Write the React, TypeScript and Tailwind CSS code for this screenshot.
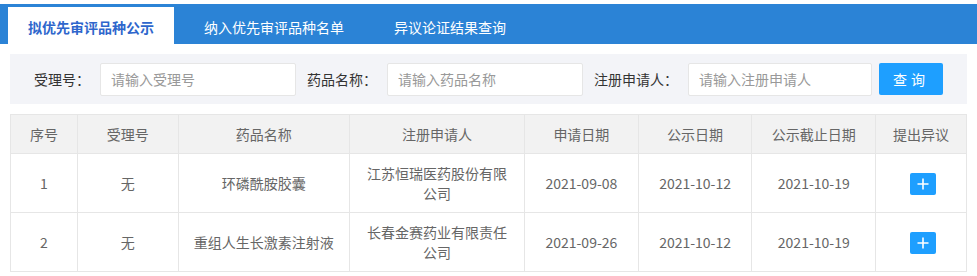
import React from 'react'

const font = { fontFamily: '"Noto Sans CJK SC", "Liberation Sans", sans-serif' }

const tabs = ['拟优先审评品种公示', '纳入优先审评品种名单', '异议论证结果查询']

const columns = [
  { title: '序号', w: 'w-[67px]' },
  { title: '受理号', w: 'w-[101px]' },
  { title: '药品名称', w: 'w-[172px]' },
  { title: '注册申请人', w: 'w-[176px]' },
  { title: '申请日期', w: 'w-[114px]' },
  { title: '公示日期', w: 'w-[114px]' },
  { title: '公示截止日期', w: 'w-[124px]' },
  { title: '提出异议', w: 'w-[91px]' },
]

const rows = [
  ['1', '无', '环磷酰胺胶囊', '江苏恒瑞医药股份有限公司', '2021-09-08', '2021-10-12', '2021-10-19'],
  ['2', '无', '重组人生长激素注射液', '长春金赛药业有限责任公司', '2021-09-26', '2021-10-12', '2021-10-19'],
]

export default function App() {
  return (
    <div className="w-[977px] h-[276px] bg-white pt-[4px]" style={font}>
      {/* Tabs */}
      <div className="flex h-[40px] items-end bg-[#2b83d6] pl-[8px]">
        <div className="flex h-[37px] w-[166px] items-center justify-center bg-white pt-[3px] text-[14px] font-bold text-[#2e66cc]">
          {tabs[0]}
        </div>
        <div className="ml-[30px] flex h-[37px] items-center pt-[3px] text-[14px] text-white">{tabs[1]}</div>
        <div className="ml-[50px] flex h-[37px] items-center pt-[3px] text-[14px] text-white">{tabs[2]}</div>
      </div>

      {/* Search bar */}
      <div className="mx-[10px] mt-[10px] flex h-[50px] items-center bg-[#f3f4f8] text-[14px] text-[#333]">
        <span className="ml-[24px] w-[66px]">受理号：</span>
        <input
          placeholder="请输入受理号"
          className="h-[33px] w-[196px] rounded-[2px] border border-[#e6e6e6] bg-white pl-[10px] text-[14px] outline-none placeholder:text-[#999]"
        />
        <span className="ml-[11px] w-[80px]">药品名称：</span>
        <input
          placeholder="请输入药品名称"
          className="h-[33px] w-[196px] rounded-[2px] border border-[#e6e6e6] bg-white pl-[10px] text-[14px] outline-none placeholder:text-[#999]"
        />
        <span className="ml-[11px] w-[94px]">注册申请人：</span>
        <input
          placeholder="请输入注册申请人"
          className="h-[33px] w-[184px] rounded-[2px] border border-[#e6e6e6] bg-white pl-[10px] text-[14px] outline-none placeholder:text-[#999]"
        />
        <button className="ml-[7px] h-[32px] w-[64px] rounded-[2px] bg-[#1e9fff] text-[14px] tracking-[4px] text-white">
          查询
        </button>
      </div>

      {/* Table */}
      <table className="mx-[10px] mt-[10px] border-collapse text-[14px] leading-[20px] text-[#666]">
        <thead>
          <tr className="bg-[#f2f2f2]">
            {columns.map((c) => (
              <th key={c.title} className={`${c.w} border border-[#e6e6e6] px-[15px] py-[9px] text-center font-normal`}>
                {c.title}
              </th>
            ))}
          </tr>
        </thead>
        <tbody>
          {rows.map((r) => (
            <tr key={r[0]}>
              {r.map((v, j) => (
                <td key={j} className="border border-[#e6e6e6] px-[15px] py-[9px] text-center">
                  {v}
                </td>
              ))}
              <td className="border border-[#e6e6e6] px-[15px] py-[9px] text-center">
                <button className="ml-[3px] inline-flex h-[22px] w-[26px] items-center justify-center rounded-[2px] bg-[#1e9fff] align-middle">
                  <svg width="12" height="12" viewBox="0 0 12 12">
                    <path d="M6 0.5v11M0.5 6h11" stroke="white" strokeWidth="1.6" />
                  </svg>
                </button>
              </td>
            </tr>
          ))}
        </tbody>
      </table>
    </div>
  )
}
